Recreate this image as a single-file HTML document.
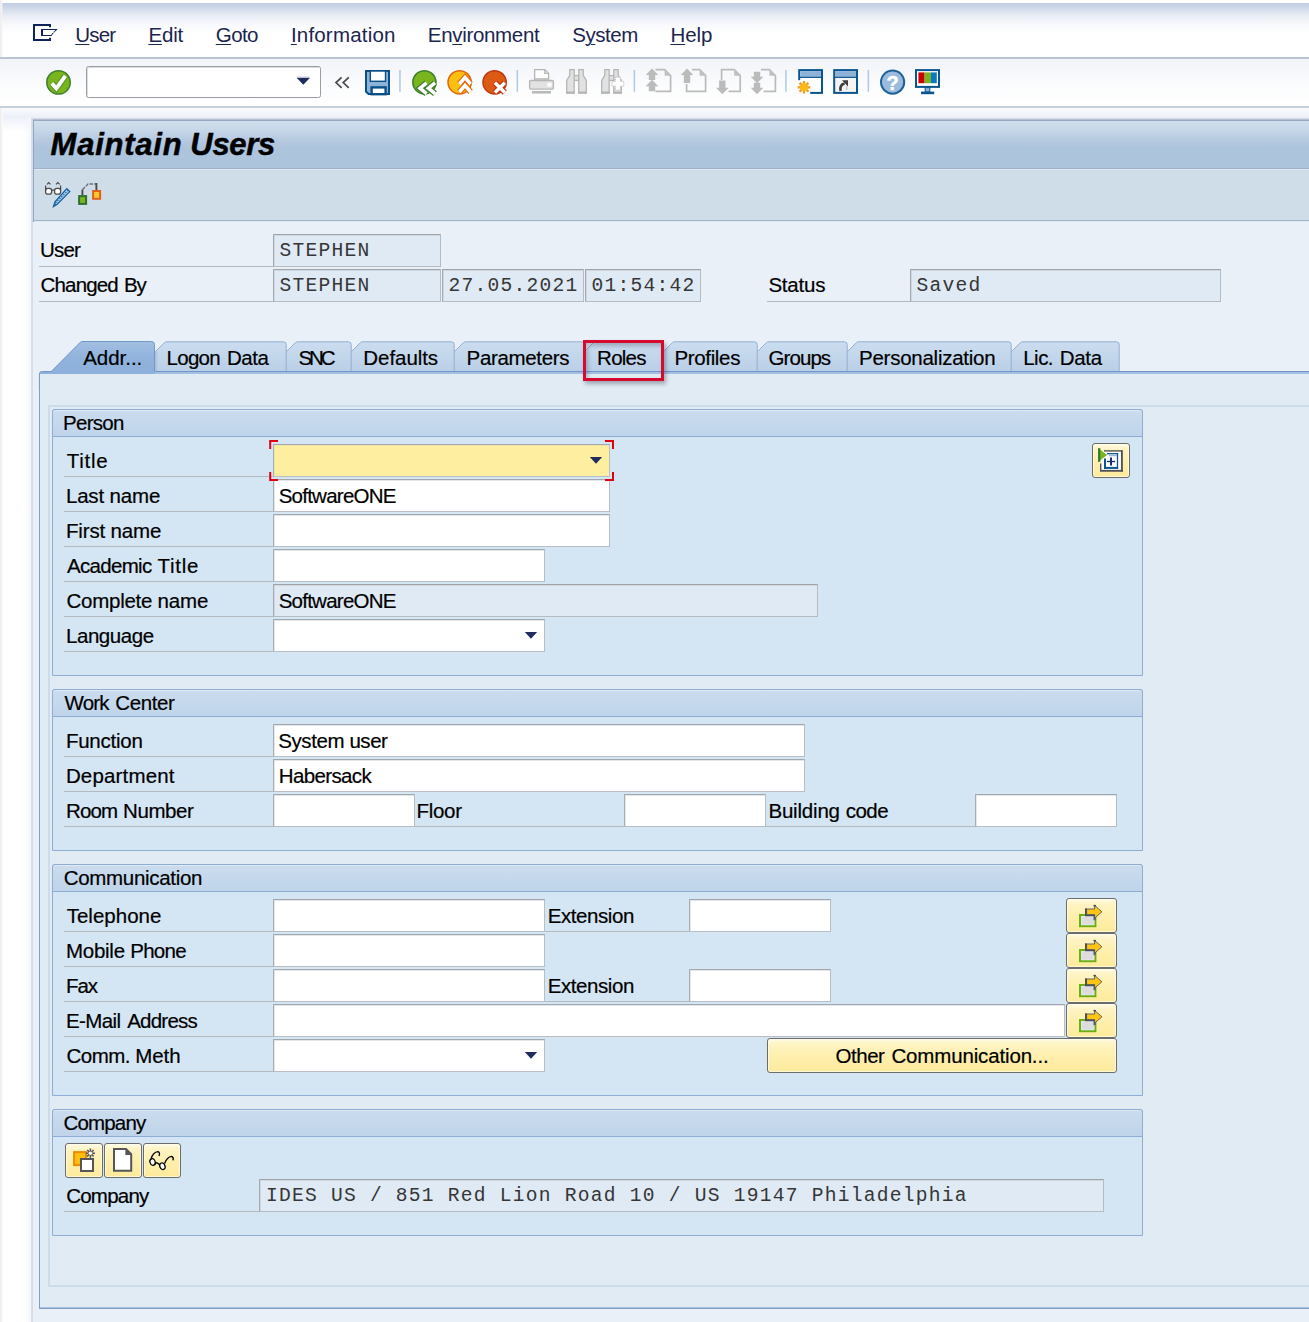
<!DOCTYPE html>
<html lang="en"><head><meta charset="utf-8"><title>Maintain Users</title>
<style>
html,body{margin:0;padding:0}
body{width:1309px;height:1322px;overflow:hidden;background:#fff;font-family:"Liberation Sans",sans-serif;color:#000}
#root{position:relative;width:1309px;height:1322px;overflow:hidden}
#root div,#root span,#root svg{position:absolute;box-sizing:border-box}
.t{white-space:nowrap;color:#000;-webkit-text-stroke:0.2px #000}
#root span.w{position:static}
.m{white-space:nowrap;color:#363636;font-family:"Liberation Mono",monospace}
.ti{white-space:nowrap;color:#000;font-weight:bold;font-style:italic;-webkit-text-stroke:0.5px #000}
.mn{white-space:nowrap;color:#1a2550}
.mn u{text-decoration:underline;text-decoration-thickness:1px;text-underline-offset:2px}
.f{background:#fff;border:1px solid #b9bec4;border-top-color:#a2a7ad;border-left-color:#a9aeb4;box-shadow:inset 1px 1px 0 #e4e7ea}
.r{background:#dfeaf5;border:1px solid #b7bcc2;border-top-color:#a0a4a8;border-left-color:#a6aaae;box-shadow:inset 1px 1px 0 #cfd8e1}
.ul{background:#b4b9be;height:1px}
.gb{background:#d4e5f3;border:1px solid #8eadd2;border-radius:3px 3px 0 0}
.gh{background:linear-gradient(#cbdcee,#bfd4ea);border:1px solid #8eadd2;border-radius:3px 3px 0 0;box-shadow:inset 0 1px 0 rgba(255,255,255,.4)}
.btn{background:linear-gradient(#fffdf0 0,#fff8d8 2px,#fef4c4 5px,#feefac 55%,#fdea9c 100%);border:1px solid #6b6c6c;border-radius:3px;box-shadow:inset 0 0 0 1px rgba(255,252,232,.75)}

</style></head>
<body>
<div id="root">
<div style="left:0px;top:3px;width:1309px;height:54px;background:linear-gradient(#c2cee5 0,#c8d3e7 3px,#dae1ee 8px,#ebeff6 14px,#f7f8fc 21px,#fff 30px)"></div>
<div style="left:0px;top:0px;width:3px;height:1322px;background:linear-gradient(90deg,#ededed,#f3f3f3 55%,rgba(255,255,255,0))"></div>
<span class="mn" style="left:75.31px;top:22.00px;font-size:20.5px;line-height:25px"><span class="w" style="letter-spacing:-0.853px"><u>U</u>ser</span></span>
<span class="mn" style="left:148.41px;top:22.00px;font-size:20.5px;line-height:25px"><span class="w" style="letter-spacing:-0.155px"><u>E</u>dit</span></span>
<span class="mn" style="left:215.78px;top:22.00px;font-size:20.5px;line-height:25px"><span class="w" style="letter-spacing:-0.596px"><u>G</u>oto</span></span>
<span class="mn" style="left:290.90px;top:22.00px;font-size:20.5px;line-height:25px"><span class="w" style="letter-spacing:0.193px"><u>I</u>nformation</span></span>
<span class="mn" style="left:427.81px;top:22.00px;font-size:20.5px;line-height:25px"><span class="w" style="letter-spacing:-0.321px">En<u>v</u>ironment</span></span>
<span class="mn" style="left:572.18px;top:22.00px;font-size:20.5px;line-height:25px"><span class="w" style="letter-spacing:-0.432px">S<u>y</u>stem</span></span>
<span class="mn" style="left:670.41px;top:22.00px;font-size:20.5px;line-height:25px"><span class="w" style="letter-spacing:-0.072px"><u>H</u>elp</span></span>
<div style="left:0px;top:57px;width:1309px;height:2px;background:#b9c4d4"></div>
<div style="left:0px;top:59px;width:1309px;height:47px;background:linear-gradient(#f1f4f9,#fbfcfd 60%,#fff)"></div>
<div style="left:0px;top:106px;width:1309px;height:2px;background:#c6cfdc"></div>
<div style="left:86px;top:66px;width:235px;height:32px;background:#fff;border:1px solid #9a9da3;border-radius:2.5px;box-shadow:inset 1px 1px 0 #dcdde0"></div>
<div style="left:31px;top:108px;width:1278px;height:1214px;background:#e9f0f8"></div>
<div style="left:3px;top:108px;width:1306px;height:10px;background:linear-gradient(#fafbfd,#eaeff8)"></div>
<div style="left:3px;top:118px;width:28px;height:14px;background:linear-gradient(#eef2f9,#fff)"></div>
<div style="left:24px;top:118px;width:7px;height:1204px;background:linear-gradient(90deg,rgba(255,255,255,0),#f4f6fa)"></div>
<div style="left:31px;top:118px;width:2px;height:1204px;background:linear-gradient(90deg,#dde2ec,#d3dae6)"></div>
<div style="left:33px;top:118px;width:1276px;height:1px;background:#d3dae6"></div>
<div style="left:33px;top:119px;width:1276px;height:1px;background:#b4c1d3"></div>
<div style="left:33px;top:120px;width:1276px;height:1px;background:#95a9c1"></div>
<div style="left:34px;top:121px;width:1275px;height:47px;background:linear-gradient(#d0dfed 0,#c6d7e8 9px,#b6cae0 19px,#adc4dd 27px,#adc4dd 100%)"></div>
<div style="left:34px;top:168px;width:1275px;height:1px;background:#9db2ca"></div>
<div style="left:34px;top:169px;width:1275px;height:1px;background:#e0e9f1"></div>
<div style="left:34px;top:170px;width:1275px;height:50px;background:#cfdde9"></div>
<div style="left:34px;top:220px;width:1275px;height:1px;background:#a2b4c7"></div>
<div style="left:34px;top:221px;width:1275px;height:1px;background:#dfe7f0"></div>
<div style="left:33px;top:120px;width:1px;height:102px;background:#8fa5c0"></div>
<span class="ti" style="left:50.56px;top:125.76px;font-size:31px;line-height:37px"><span class="w" style="letter-spacing:0.768px">Maintain</span> <span class="w" style="letter-spacing:-0.303px;margin-left:-0.73px">Users</span></span>
<div class="ul" style="left:39px;top:266px;width:234px;height:1px;"></div>
<div class="ul" style="left:39px;top:301px;width:234px;height:1px;"></div>
<span class="t" style="left:40.01px;top:237.40px;font-size:20.5px;line-height:25px"><span class="w" style="letter-spacing:-0.786px">User</span></span>
<span class="t" style="left:40.58px;top:272.40px;font-size:20.5px;line-height:25px"><span class="w" style="letter-spacing:-0.845px">Changed</span> <span class="w" style="letter-spacing:-1.091px;margin-left:0.44px">By</span></span>
<div class="r" style="left:273px;top:234px;width:168px;height:33px;"></div>
<div class="r" style="left:273px;top:269px;width:168px;height:33px;"></div>
<div class="r" style="left:442px;top:269px;width:142px;height:33px;"></div>
<div class="r" style="left:585px;top:269px;width:116px;height:33px;"></div>
<span class="m" style="left:279.40px;top:239.08px;font-size:19.6px;line-height:24px;letter-spacing:1.240px;">STEPHEN</span>
<span class="m" style="left:279.40px;top:274.08px;font-size:19.6px;line-height:24px;letter-spacing:1.240px;">STEPHEN</span>
<span class="m" style="left:448.50px;top:274.08px;font-size:19.6px;line-height:24px;letter-spacing:1.240px;">27.05.2021</span>
<span class="m" style="left:591.50px;top:274.08px;font-size:19.6px;line-height:24px;letter-spacing:1.240px;">01:54:42</span>
<div class="ul" style="left:767px;top:301px;width:143px;height:1px;"></div>
<span class="t" style="left:768.38px;top:272.40px;font-size:20.5px;line-height:25px"><span class="w" style="letter-spacing:-0.215px">Status</span></span>
<div class="r" style="left:910px;top:269px;width:311px;height:33px;"></div>
<span class="m" style="left:916.40px;top:274.08px;font-size:19.6px;line-height:24px;letter-spacing:1.240px;">Saved</span>
<svg style="left:0;top:330px" width="1309" height="60" viewBox="0 330 1309 60"><defs><linearGradient id="ti" x1="0" y1="0" x2="0" y2="1"><stop offset="0" stop-color="#cbddef"/><stop offset="1" stop-color="#b9cfe7"/></linearGradient><linearGradient id="ta" x1="0" y1="0" x2="0" y2="1"><stop offset="0" stop-color="#a3bfe3"/><stop offset="0.5" stop-color="#90b3dc"/><stop offset="1" stop-color="#8cb0da"/></linearGradient></defs><path d="M1010 372.5 L1010 353 L1020.4 342.7 Q1021.2 341.8 1023 341.8 L1116.4 341.8 Q1119.2 341.8 1119.2 344.6 L1119.2 372.5 Z" fill="url(#ti)" stroke="#93afd2" stroke-width="1"/><path d="M846 372.5 L846 353 L856.4 342.7 Q857.2 341.8 859 341.8 L1008.4 341.8 Q1011.2 341.8 1011.2 344.6 L1011.2 372.5 Z" fill="url(#ti)" stroke="#93afd2" stroke-width="1"/><path d="M756 372.5 L756 353 L766.4 342.7 Q767.2 341.8 769 341.8 L844.4 341.8 Q847.2 341.8 847.2 344.6 L847.2 372.5 Z" fill="url(#ti)" stroke="#93afd2" stroke-width="1"/><path d="M662 372.5 L662 353 L672.4 342.7 Q673.2 341.8 675 341.8 L754.4 341.8 Q757.2 341.8 757.2 344.6 L757.2 372.5 Z" fill="url(#ti)" stroke="#93afd2" stroke-width="1"/><path d="M583 372.5 L583 353 L593.4 342.7 Q594.2 341.8 596 341.8 L660.4 341.8 Q663.2 341.8 663.2 344.6 L663.2 372.5 Z" fill="url(#ti)" stroke="#93afd2" stroke-width="1"/><path d="M453 372.5 L453 353 L463.4 342.7 Q464.2 341.8 466 341.8 L581.4 341.8 Q584.2 341.8 584.2 344.6 L584.2 372.5 Z" fill="url(#ti)" stroke="#93afd2" stroke-width="1"/><path d="M350 372.5 L350 353 L360.4 342.7 Q361.2 341.8 363 341.8 L451.4 341.8 Q454.2 341.8 454.2 344.6 L454.2 372.5 Z" fill="url(#ti)" stroke="#93afd2" stroke-width="1"/><path d="M285 372.5 L285 353 L295.4 342.7 Q296.2 341.8 298 341.8 L348.4 341.8 Q351.2 341.8 351.2 344.6 L351.2 372.5 Z" fill="url(#ti)" stroke="#93afd2" stroke-width="1"/><path d="M154 372.5 L154 353 L164.4 342.7 Q165.2 341.8 167 341.8 L283.4 341.8 Q286.2 341.8 286.2 344.6 L286.2 372.5 Z" fill="url(#ti)" stroke="#93afd2" stroke-width="1"/><path d="M39 390 V375 Q39 371 43 371 H1309 V375 H40 V390 Z" fill="#a3c0e3"/><path d="M39.5 390 V375 Q39.5 371.5 43 371.5 H1309" fill="none" stroke="#7196c9" stroke-width="1.2"/><path d="M40 374.5 H1309" fill="none" stroke="#6e93c6" stroke-width="1.2"/><path d="M40 375 V374.5 Q40 371.5 43 371.5 H51 L80 342.6 Q81 341.5 83 341.5 H151.5 Q154.5 341.5 154.5 344.5 V375 Z" fill="url(#ta)"/><path d="M43 371.5 H51.3 L80.3 342.3 Q81 341.5 83 341.5 H151.5 Q154.5 341.5 154.5 344.5 V371.5" fill="none" stroke="#7297c9" stroke-width="1"/><rect x="155" y="352" width="1.5" height="19" fill="#9fb4cf" opacity="0.6"/><rect x="156.5" y="352" width="1.5" height="19" fill="#b4c6dc" opacity="0.5"/></svg>
<span class="t" style="left:83.15px;top:345.20px;font-size:20.5px;line-height:25px"><span class="w" style="letter-spacing:-0.025px">Addr...</span></span>
<span class="t" style="left:166.51px;top:345.20px;font-size:20.5px;line-height:25px"><span class="w" style="letter-spacing:-0.704px">Logon</span> <span class="w" style="letter-spacing:-0.438px;margin-left:1.22px">Data</span></span>
<span class="t" style="left:298.48px;top:345.20px;font-size:20.5px;line-height:25px"><span class="w" style="letter-spacing:-3.058px">SNC</span></span>
<span class="t" style="left:363.31px;top:345.20px;font-size:20.5px;line-height:25px"><span class="w" style="letter-spacing:-0.054px">Defaults</span></span>
<span class="t" style="left:466.61px;top:345.20px;font-size:20.5px;line-height:25px"><span class="w" style="letter-spacing:-0.336px">Parameters</span></span>
<span class="t" style="left:597.11px;top:345.20px;font-size:20.5px;line-height:25px"><span class="w" style="letter-spacing:-0.755px">Roles</span></span>
<span class="t" style="left:674.41px;top:345.20px;font-size:20.5px;line-height:25px"><span class="w" style="letter-spacing:-0.337px">Profiles</span></span>
<span class="t" style="left:768.58px;top:345.20px;font-size:20.5px;line-height:25px"><span class="w" style="letter-spacing:-0.940px">Groups</span></span>
<span class="t" style="left:859.01px;top:345.20px;font-size:20.5px;line-height:25px"><span class="w" style="letter-spacing:-0.250px">Personalization</span></span>
<span class="t" style="left:1023.21px;top:345.20px;font-size:20.5px;line-height:25px"><span class="w" style="letter-spacing:-0.514px">Lic.</span> <span class="w" style="letter-spacing:-0.305px;margin-left:0.96px">Data</span></span>
<div style="left:39px;top:374px;width:1270px;height:935px;background:#e0ebf4;border-left:1px solid #7f9fc7;border-bottom:1px solid #7f9fc7"></div>
<div style="left:40px;top:1307px;width:1269px;height:1px;background:#a9c1de"></div>
<div style="left:48px;top:405px;width:1261px;height:882px;border-left:2px solid #cddceb;border-top:2px solid #cddceb;border-bottom:2px solid #cddceb"></div>
<div style="left:583px;top:340px;width:81px;height:41px;border:3px solid #d60a2e;box-shadow:2px 3px 4px rgba(40,40,60,.35),inset 2px 3px 4px rgba(40,40,60,.28)"></div>
<div class="gb" style="left:52px;top:409px;width:1091px;height:267px;"></div>
<div class="gh" style="left:52px;top:409px;width:1091px;height:28px;"></div>
<span class="t" style="left:63.11px;top:409.90px;font-size:20.5px;line-height:25px"><span class="w" style="letter-spacing:-0.752px">Person</span></span>
<div class="gb" style="left:52px;top:689px;width:1091px;height:162px;"></div>
<div class="gh" style="left:52px;top:689px;width:1091px;height:28px;"></div>
<span class="t" style="left:64.60px;top:689.90px;font-size:20.5px;line-height:25px"><span class="w" style="letter-spacing:-0.818px">Work</span> <span class="w" style="letter-spacing:-0.374px;margin-left:0.80px">Center</span></span>
<div class="gb" style="left:52px;top:864px;width:1091px;height:232px;"></div>
<div class="gh" style="left:52px;top:864px;width:1091px;height:28px;"></div>
<span class="t" style="left:63.68px;top:864.90px;font-size:20.5px;line-height:25px"><span class="w" style="letter-spacing:-0.301px">Communication</span></span>
<div class="gb" style="left:52px;top:1109px;width:1091px;height:127px;"></div>
<div class="gh" style="left:52px;top:1109px;width:1091px;height:28px;"></div>
<span class="t" style="left:63.57px;top:1109.90px;font-size:20.5px;line-height:25px"><span class="w" style="letter-spacing:-0.844px">Company</span></span>
<div class="ul" style="left:64px;top:476px;width:209px;height:1px;"></div>
<span class="t" style="left:66.64px;top:448.00px;font-size:20.5px;line-height:25px"><span class="w" style="letter-spacing:0.752px">Title</span></span>
<div class="ul" style="left:64px;top:511px;width:209px;height:1px;"></div>
<span class="t" style="left:65.91px;top:483.00px;font-size:20.5px;line-height:25px"><span class="w" style="letter-spacing:-0.167px">Last</span> <span class="w" style="letter-spacing:-0.098px;margin-left:-0.27px">name</span></span>
<div class="ul" style="left:64px;top:546px;width:209px;height:1px;"></div>
<span class="t" style="left:65.91px;top:518.00px;font-size:20.5px;line-height:25px"><span class="w" style="letter-spacing:-0.144px">First</span> <span class="w" style="letter-spacing:-0.098px;margin-left:-0.32px">name</span></span>
<div class="ul" style="left:64px;top:581px;width:209px;height:1px;"></div>
<span class="t" style="left:67.05px;top:553.00px;font-size:20.5px;line-height:25px"><span class="w" style="letter-spacing:-0.697px">Academic</span> <span class="w" style="letter-spacing:0.727px;margin-left:0.36px">Title</span></span>
<div class="ul" style="left:64px;top:616px;width:209px;height:1px;"></div>
<span class="t" style="left:66.57px;top:588.00px;font-size:20.5px;line-height:25px"><span class="w" style="letter-spacing:-0.263px">Complete</span> <span class="w" style="letter-spacing:-0.065px;margin-left:-0.49px">name</span></span>
<div class="ul" style="left:64px;top:651px;width:209px;height:1px;"></div>
<span class="t" style="left:65.91px;top:623.00px;font-size:20.5px;line-height:25px"><span class="w" style="letter-spacing:-0.416px">Language</span></span>
<div class="f" style="left:273px;top:444px;width:337px;height:33px;background:#fdeea0;box-shadow:inset 1px 1px 0 #f1e4a4"></div>
<div class="f" style="left:273px;top:479px;width:337px;height:33px;"></div>
<div class="f" style="left:273px;top:514px;width:337px;height:33px;"></div>
<div class="f" style="left:273px;top:549px;width:272px;height:33px;"></div>
<div class="r" style="left:273px;top:584px;width:545px;height:33px;"></div>
<div class="f" style="left:273px;top:619px;width:272px;height:33px;"></div>
<span class="t" style="left:278.68px;top:483.00px;font-size:20.5px;line-height:25px"><span class="w" style="letter-spacing:-0.756px">SoftwareONE</span></span>
<span class="t" style="left:278.68px;top:588.00px;font-size:20.5px;line-height:25px"><span class="w" style="letter-spacing:-0.756px">SoftwareONE</span></span>
<div class="ul" style="left:64px;top:756px;width:209px;height:1px;"></div>
<span class="t" style="left:65.91px;top:728.00px;font-size:20.5px;line-height:25px"><span class="w" style="letter-spacing:-0.249px">Function</span></span>
<div class="ul" style="left:64px;top:791px;width:209px;height:1px;"></div>
<span class="t" style="left:65.91px;top:763.00px;font-size:20.5px;line-height:25px"><span class="w" style="letter-spacing:0.159px">Department</span></span>
<div class="ul" style="left:64px;top:826px;width:209px;height:1px;"></div>
<span class="t" style="left:65.91px;top:798.00px;font-size:20.5px;line-height:25px"><span class="w" style="letter-spacing:-0.820px">Room</span> <span class="w" style="letter-spacing:-0.396px;margin-left:-0.00px">Number</span></span>
<div class="f" style="left:273px;top:724px;width:532px;height:33px;"></div>
<div class="f" style="left:273px;top:759px;width:532px;height:33px;"></div>
<div class="f" style="left:273px;top:794px;width:142px;height:33px;"></div>
<span class="t" style="left:278.28px;top:728.00px;font-size:20.5px;line-height:25px"><span class="w" style="letter-spacing:-0.432px">System</span> <span class="w" style="letter-spacing:-0.444px;margin-left:-0.36px">user</span></span>
<span class="t" style="left:278.71px;top:763.00px;font-size:20.5px;line-height:25px"><span class="w" style="letter-spacing:-0.625px">Habersack</span></span>
<div class="ul" style="left:415px;top:826px;width:209px;height:1px;"></div>
<span class="t" style="left:416.61px;top:798.00px;font-size:20.5px;line-height:25px"><span class="w" style="letter-spacing:-0.323px">Floor</span></span>
<div class="f" style="left:624px;top:794px;width:142px;height:33px;"></div>
<div class="ul" style="left:766px;top:826px;width:209px;height:1px;"></div>
<span class="t" style="left:768.41px;top:798.00px;font-size:20.5px;line-height:25px"><span class="w" style="letter-spacing:-0.194px">Building</span> <span class="w" style="letter-spacing:-0.530px;margin-left:0.23px">code</span></span>
<div class="f" style="left:975px;top:794px;width:142px;height:33px;"></div>
<div class="ul" style="left:64px;top:931px;width:209px;height:1px;"></div>
<span class="t" style="left:66.64px;top:903.00px;font-size:20.5px;line-height:25px"><span class="w" style="letter-spacing:0.016px">Telephone</span></span>
<div class="ul" style="left:64px;top:966px;width:209px;height:1px;"></div>
<span class="t" style="left:65.91px;top:938.00px;font-size:20.5px;line-height:25px"><span class="w" style="letter-spacing:-0.242px">Mobile</span> <span class="w" style="letter-spacing:-0.721px;margin-left:-0.33px">Phone</span></span>
<div class="ul" style="left:64px;top:1001px;width:209px;height:1px;"></div>
<span class="t" style="left:65.91px;top:973.00px;font-size:20.5px;line-height:25px"><span class="w" style="letter-spacing:-1.018px">Fax</span></span>
<div class="ul" style="left:64px;top:1036px;width:209px;height:1px;"></div>
<span class="t" style="left:65.91px;top:1008.00px;font-size:20.5px;line-height:25px"><span class="w" style="letter-spacing:-0.588px">E-Mail</span> <span class="w" style="letter-spacing:-0.769px;margin-left:0.99px">Address</span></span>
<div class="ul" style="left:64px;top:1071px;width:209px;height:1px;"></div>
<span class="t" style="left:66.57px;top:1043.00px;font-size:20.5px;line-height:25px"><span class="w" style="letter-spacing:-0.548px">Comm.</span> <span class="w" style="letter-spacing:-0.096px;margin-left:-0.28px">Meth</span></span>
<div class="f" style="left:273px;top:899px;width:272px;height:33px;"></div>
<div class="f" style="left:273px;top:934px;width:272px;height:33px;"></div>
<div class="f" style="left:273px;top:969px;width:272px;height:33px;"></div>
<div class="f" style="left:273px;top:1004px;width:792px;height:33px;"></div>
<div class="f" style="left:273px;top:1039px;width:272px;height:33px;"></div>
<div class="ul" style="left:545px;top:931px;width:144px;height:1px;"></div>
<span class="t" style="left:547.71px;top:903.00px;font-size:20.5px;line-height:25px"><span class="w" style="letter-spacing:-0.428px">Extension</span></span>
<div class="f" style="left:689px;top:899px;width:142px;height:33px;"></div>
<div class="ul" style="left:545px;top:1001px;width:144px;height:1px;"></div>
<span class="t" style="left:547.71px;top:973.00px;font-size:20.5px;line-height:25px"><span class="w" style="letter-spacing:-0.428px">Extension</span></span>
<div class="f" style="left:689px;top:969px;width:142px;height:33px;"></div>
<div class="btn" style="left:1066px;top:898px;width:51px;height:35px;"></div>
<div class="btn" style="left:1066px;top:933px;width:51px;height:35px;"></div>
<div class="btn" style="left:1066px;top:968px;width:51px;height:35px;"></div>
<div class="btn" style="left:1066px;top:1003px;width:51px;height:35px;"></div>
<div class="btn" style="left:767px;top:1038px;width:350px;height:35px;"></div>
<span class="t" style="left:835.43px;top:1043.00px;font-size:20.5px;line-height:25px"><span class="w" style="letter-spacing:-0.442px">Other</span> <span class="w" style="letter-spacing:-0.155px;margin-left:1.29px">Communication...</span></span>
<div class="btn" style="left:1092px;top:443px;width:38px;height:35px;"></div>
<div class="btn" style="left:65px;top:1143px;width:38px;height:35px;"></div>
<div class="btn" style="left:104px;top:1143px;width:38px;height:35px;"></div>
<div class="btn" style="left:143px;top:1143px;width:38px;height:35px;"></div>
<div class="ul" style="left:64px;top:1211px;width:195px;height:1px;"></div>
<span class="t" style="left:66.17px;top:1183.00px;font-size:20.5px;line-height:25px"><span class="w" style="letter-spacing:-0.761px">Company</span></span>
<div class="r" style="left:259px;top:1179px;width:845px;height:33px;"></div>
<span class="m" style="left:265.90px;top:1184.08px;font-size:19.6px;line-height:24px;letter-spacing:1.240px;">IDES US / 851 Red Lion Road 10 / US 19147 Philadelphia</span>
<svg style="left:30px;top:20px" width="32" height="26" viewBox="30 20 32 26" ><g fill="none" stroke="#0e2458"><path d="M50 27.3 V25 H34 V40 H50 V37.7" stroke-width="2"/><path d="M42 29 V36" stroke-width="2"/><path d="M41 29.5 H57.2 M41 35.5 H51.3 L52 34.5 M52.3 34.2 L53 33 M53.6 32.4 L55 31.4 M55.2 31 L56.3 29.6" stroke-width="1.15"/></g></svg>
<svg style="left:40px;top:62px" width="910" height="40" viewBox="40 62 910 40" ><circle cx="58.5" cy="82.4" r="11.7" fill="#79b51c" stroke="#3f7f2e" stroke-width="1.5"/><path d="M51.8 83.4 L56.4 88.4 L65.4 75.8" fill="none" stroke="#3f7f2e" stroke-opacity=".6" stroke-width="6"/><path d="M51.8 83.4 L56.4 88.4 L65.4 75.8" fill="none" stroke="#fff" stroke-width="3.9"/><path d="M296.8 78 H309.8 L303.3 84.8 Z" fill="#1f2d5e"/><path d="M297 77.2 H309.6" stroke="#8f97b4" stroke-width=".8"/><path d="M341.6 77.3 L336 82.6 L341.6 87.9 M348.8 77.3 L343.2 82.6 L348.8 87.9" fill="none" stroke="#4a4a4a" stroke-width="1.7"/><path d="M366 71 H389 V94 H368.5 L366 91.5 Z" fill="#8db3d9" stroke="#0a5088" stroke-width="2"/><rect x="370.3" y="71" width="15.2" height="10.3" fill="#fff" stroke="#0a5088" stroke-width="1.4"/><rect x="371.6" y="87.4" width="14" height="6.8" fill="#fff" stroke="#0a5088" stroke-width="2.4"/><rect x="399.2" y="70" width="1.5" height="21.8" fill="#aec8e8"/><rect x="516.6" y="70" width="1.5" height="21.8" fill="#aec8e8"/><rect x="633.6" y="70" width="1.5" height="21.8" fill="#aec8e8"/><rect x="785.2" y="70" width="1.5" height="21.8" fill="#aec8e8"/><rect x="867.6" y="70" width="1.5" height="21.8" fill="#aec8e8"/><circle cx="424.4" cy="82.3" r="11.6" fill="#79b51c" stroke="#3f7f2e" stroke-width="1.5"/><path d="M426.6 82.8 L420 88.2 L426.6 93.6 M435 82.8 L428.4 88.2 L435 93.6" fill="none" stroke="#3f7f2e" stroke-width="6"/><path d="M426.6 82.8 L420 88.2 L426.6 93.6 M435 82.8 L428.4 88.2 L435 93.6" fill="none" stroke="#fff" stroke-width="3.5"/><circle cx="459.6" cy="82.3" r="11.6" fill="#fdc010" stroke="#e0670f" stroke-width="1.5"/><path d="M459.4 84 L465 77.4 L470.6 84 M459.4 92 L465 85.4 L470.6 92" fill="none" stroke="#e0670f" stroke-width="5.8"/><path d="M459.4 84 L465 77.4 L470.6 84 M459.4 92 L465 85.4 L470.6 92" fill="none" stroke="#fff" stroke-width="3.5"/><circle cx="494.6" cy="82.3" r="11.6" fill="#dc5a14" stroke="#c0390f" stroke-width="1.5"/><path d="M495 82.8 L504.8 92.6 M504.8 82.8 L495 92.6" fill="none" stroke="#bb330c" stroke-width="5.8"/><path d="M495 82.8 L504.8 92.6 M504.8 82.8 L495 92.6" fill="none" stroke="#fff" stroke-width="3.5"/><path d="M534.6 79 V69.6 H544.8 L548.6 73.4 V79 Z" fill="#fdfdfd" stroke="#b5b5b5" stroke-width="1.3"/><path d="M544.8 69.6 V73.4 H548.6" fill="none" stroke="#b5b5b5" stroke-width="1.3"/><rect x="529.6" y="80.5" width="23.8" height="8.6" rx="1" fill="#e2e2e2" stroke="#b5b5b5" stroke-width="1.3"/><rect x="547.4" y="82.8" width="4.2" height="3.8" fill="#fff"/><rect x="532" y="91" width="19" height="2.6" fill="#b9b9b9"/><g transform="translate(0 0)" fill="#e2e2e2" stroke="#b5b5b5" stroke-width="1.3"><rect x="573.6" y="75.6" width="5.8" height="4.8"/><path d="M566.7 93 V80.4 L569.8 75.4 V69.7 H574.2 V93 Z"/><path d="M586.3 93 V80.4 L583.2 75.4 V69.7 H578.8 V93 Z"/><path d="M566.2 92.6 H574.8 M578.2 92.6 H586.8" stroke-width="2"/></g><g transform="translate(35 0)" fill="#e2e2e2" stroke="#b5b5b5" stroke-width="1.3"><rect x="573.6" y="75.6" width="5.8" height="4.8"/><path d="M566.7 93 V80.4 L569.8 75.4 V69.7 H574.2 V93 Z"/><path d="M586.3 93 V80.4 L583.2 75.4 V69.7 H578.8 V93 Z"/><path d="M566.2 92.6 H574.8 M578.2 92.6 H586.8" stroke-width="2"/></g><path d="M615.4 77.2 H620.4 V81.2 H623.8 V86.2 H620.4 V90 H615.4 V86.2 H612 V81.2 H615.4 Z" fill="#fff" stroke="#b5b5b5" stroke-width=".9" stroke-dasharray="1.2 1"/><path d="M655.4 69.7 H664.6 L670.6 75.7 V91.3 H655.4" fill="none" stroke="#bbbbbb" stroke-width="1.7"/><path d="M664.6 69.10000000000001 V75.7 H671.2 Z" fill="#c0c0c0"/><path d="M652 68.6 L658.3 75.0 H655.2 V80.0 H648.8 V75.0 H645.7 Z" fill="#bbbbbb"/><path d="M652 79.8 L658.3 86.2 H655.2 V91.2 H648.8 V86.2 H645.7 Z" fill="#bbbbbb"/><path d="M692 69.7 H699.6 L705.6 75.7 V91.3 H686.6 V84" fill="none" stroke="#bbbbbb" stroke-width="1.7"/><path d="M699.6 69.10000000000001 V75.7 H706.2 Z" fill="#c0c0c0"/><path d="M687 68.6 L693.3 75.0 H690.2 V83.0 H683.8 V75.0 H680.7 Z" fill="#bbbbbb"/><path d="M721.6 80 V69.7 H734.2 L740.2 75.7 V91.3 H728.6" fill="none" stroke="#bbbbbb" stroke-width="1.7"/><path d="M734.2 69.10000000000001 V75.7 H740.8000000000001 Z" fill="#c0c0c0"/><path d="M722.3 94.2 L728.5999999999999 87.8 H725.5 V80.39999999999999 H719.0999999999999 V87.8 H716.0 Z" fill="#bbbbbb"/><path d="M761 69.7 H769.4 L775.4 75.7 V91.3 H763.6" fill="none" stroke="#bbbbbb" stroke-width="1.7"/><path d="M769.4 69.10000000000001 V75.7 H776.0 Z" fill="#c0c0c0"/><path d="M757 83.2 L763.3 76.8 H760.2 V71.8 H753.8 V76.8 H750.7 Z" fill="#bbbbbb"/><path d="M757 94.2 L763.3 87.8 H760.2 V82.8 H753.8 V87.8 H750.7 Z" fill="#bbbbbb"/><rect x="799.2" y="70.1" width="22.8" height="22.8" fill="#fff" stroke="#0a5590" stroke-width="2"/><rect x="800.2" y="71.1" width="20.8" height="5.6" fill="#8fb2d8"/><path d="M799 77.3 H822" stroke="#0a5590" stroke-width="1.3"/><rect x="796" y="80.2" width="14.2" height="15" fill="#fcfcfd"/><g stroke="#f39a1e" stroke-width="2.2"><path d="M804 81 V93.6 M797.7 87.3 H810.3 M799.6 82.9 L808.4 91.7 M808.4 82.9 L799.6 91.7"/></g><circle cx="804" cy="87.3" r="4" fill="#fdb913"/><rect x="834.2" y="70.1" width="22.8" height="22.8" fill="#f5f5f5" stroke="#0a5590" stroke-width="2"/><rect x="835.2" y="71.1" width="20.8" height="5.6" fill="#8fb2d8"/><path d="M834 77.3 H857" stroke="#0a5590" stroke-width="1.3"/><path d="M840.6 91 Q839.4 84.6 844.6 83.4" fill="none" stroke="#3d3d3d" stroke-width="2.6"/><path d="M842 80.2 H848 V86.4 Z" fill="#3d3d3d"/><path d="M846.6 86 V90" stroke="#c8c8c8" stroke-width="1.6"/><circle cx="892.6" cy="82.1" r="11.6" fill="#9bbbdc" stroke="#1d6199" stroke-width="2"/><text x="892.7" y="89.6" text-anchor="middle" font-family="Liberation Sans, sans-serif" font-weight="bold" font-size="20" fill="#fff" stroke="#fff" stroke-width=".5">?</text><rect x="916" y="70.1" width="23" height="16.8" fill="#fff" stroke="#0a5590" stroke-width="2"/><rect x="918.4" y="72.4" width="6.2" height="10.8" fill="#cc0000"/><rect x="924.6" y="72.4" width="6.4" height="10.8" fill="#78b41e"/><rect x="931" y="72.4" width="5.8" height="10.8" fill="#0a78c8"/><rect x="925.2" y="87.6" width="4.6" height="4.4" fill="#8fb2d8" stroke="#0a5590" stroke-width="1"/><rect x="921" y="91.6" width="13.2" height="2.6" fill="#0a5590"/></svg>
<svg style="left:40px;top:178px" width="70" height="34" viewBox="40 178 70 34" ><g fill="#fff" stroke="#4a4a4a" stroke-width="1.25"><rect x="45.6" y="188.4" width="6" height="5.8" rx="2.2"/><rect x="54.6" y="188.4" width="6" height="5.8" rx="2.2"/></g><path d="M45.6 191 V185.4 M47 184.4 L48.7 182.6 L50.4 184.4 M56 184.4 L57.8 182.6 L59.6 184.4 M60.6 190 V185.4 M51.8 190 H54.4" fill="none" stroke="#4a4a4a" stroke-width="1.25"/><path d="M66.8 188.6 L69.8 191.6 L57.2 204.2 L53.4 206.6 L54.8 202 Z" fill="#a9c9e8" stroke="#0a5a9a" stroke-width="1.15"/><path d="M68.3 190.1 L55.4 203" stroke="#1a66a6" stroke-width="1.2" stroke-dasharray="1.3 1.5"/><path d="M53.4 206.6 L54.6 202.6 L56.8 204.6 Z" fill="#2a70ac"/><path d="M82.4 195 V189.6 M96.4 183 V190" fill="none" stroke="#4a4a4a" stroke-width="1.9"/><path d="M82.6 189.4 L88 184 H96.4" fill="none" stroke="#555" stroke-opacity=".8" stroke-width="1.4" stroke-dasharray="3.4 1.2"/><rect x="79.1" y="196.1" width="7" height="7.8" fill="#7ab51d" stroke="#2f6f2f" stroke-width="2"/><rect x="93.1" y="191" width="7" height="7.8" fill="#fdc82a" stroke="#e2611a" stroke-width="2"/></svg>
<svg style="left:260px;top:430px" width="360" height="640" viewBox="260 430 360 640" ><path d="M589.8 457 H602.2 L596 463.8 Z" fill="#1f2d5e"/><path d="M524.8 632 H537.2 L531 638.8 Z" fill="#1f2d5e"/><path d="M524.8 1052 H537.2 L531 1058.8 Z" fill="#1f2d5e"/><g fill="none" stroke="#e0000f" stroke-width="2"><path d="M278 441 H270.2 V449"/><path d="M605 441 H613 V449"/><path d="M278 480 H270.2 V472"/><path d="M605 480 H613 V472"/></g></svg>
<svg style="left:60px;top:440px" width="1080" height="740" viewBox="60 440 1080 740" ><rect x="1101" y="451.4" width="20.4" height="19" fill="#fff"/><g fill="none" stroke="#50525a"><path d="M1104 450.9 H1122" stroke-width="1.4"/><path d="M1121.9 450.2 V471.7" stroke-width="1.9"/><path d="M1100 470.8 H1122.8" stroke-width="1.9"/><path d="M1100.7 463.6 V471" stroke-width="1.4"/></g><g fill="none" stroke="#0a5590"><path d="M1107 453.7 H1118.1" stroke-width="1.3"/><path d="M1117.5 453 V469" stroke-width="1.3"/><path d="M1104 467.9 H1118.1" stroke-width="2"/><path d="M1105 458.6 V469" stroke-width="2"/></g><path d="M1109 455.6 H1116.8" stroke="#9bbbdc" stroke-width="1.4"/><path d="M1111 457.4 V465.6" stroke="#142a7a" stroke-width="2"/><path d="M1106.9 461.5 H1115.1" stroke="#142a7a" stroke-width="1.3"/><path d="M1098.2 448.2 L1107.2 455 L1098.2 461.8 Z" fill="#7ab51d"/><path d="M1099.2 448.2 V461.8" stroke="#2f7a2f" stroke-width="2.2"/><g transform="translate(0 0)"><rect x="1080" y="915" width="15.4" height="11.2" fill="#dddddd" stroke="#6ab011" stroke-width="2"/><rect x="1081.5" y="916.5" width="12.4" height="8.2" fill="none" stroke="#e9e6f0" stroke-width="1" opacity=".8"/><path d="M1094.6 915 V920.2" stroke="#5a6070" stroke-width="2.2"/><path d="M1086.6 909 H1094.6 V905.4 L1101.9 911.8 L1094.6 918.2 V914.8 H1086.6 Z" fill="#fec514" stroke="#4a5060" stroke-width="1" stroke-opacity=".85"/><path d="M1085.9 908.3 V915.6 M1085 915.3 H1095" fill="none" stroke="#4a5060" stroke-width="1.8"/><path d="M1093.4 905.6 H1096" stroke="#4a5060" stroke-width="1.4"/></g><g transform="translate(0 35)"><rect x="1080" y="915" width="15.4" height="11.2" fill="#dddddd" stroke="#6ab011" stroke-width="2"/><rect x="1081.5" y="916.5" width="12.4" height="8.2" fill="none" stroke="#e9e6f0" stroke-width="1" opacity=".8"/><path d="M1094.6 915 V920.2" stroke="#5a6070" stroke-width="2.2"/><path d="M1086.6 909 H1094.6 V905.4 L1101.9 911.8 L1094.6 918.2 V914.8 H1086.6 Z" fill="#fec514" stroke="#4a5060" stroke-width="1" stroke-opacity=".85"/><path d="M1085.9 908.3 V915.6 M1085 915.3 H1095" fill="none" stroke="#4a5060" stroke-width="1.8"/><path d="M1093.4 905.6 H1096" stroke="#4a5060" stroke-width="1.4"/></g><g transform="translate(0 70)"><rect x="1080" y="915" width="15.4" height="11.2" fill="#dddddd" stroke="#6ab011" stroke-width="2"/><rect x="1081.5" y="916.5" width="12.4" height="8.2" fill="none" stroke="#e9e6f0" stroke-width="1" opacity=".8"/><path d="M1094.6 915 V920.2" stroke="#5a6070" stroke-width="2.2"/><path d="M1086.6 909 H1094.6 V905.4 L1101.9 911.8 L1094.6 918.2 V914.8 H1086.6 Z" fill="#fec514" stroke="#4a5060" stroke-width="1" stroke-opacity=".85"/><path d="M1085.9 908.3 V915.6 M1085 915.3 H1095" fill="none" stroke="#4a5060" stroke-width="1.8"/><path d="M1093.4 905.6 H1096" stroke="#4a5060" stroke-width="1.4"/></g><g transform="translate(0 105)"><rect x="1080" y="915" width="15.4" height="11.2" fill="#dddddd" stroke="#6ab011" stroke-width="2"/><rect x="1081.5" y="916.5" width="12.4" height="8.2" fill="none" stroke="#e9e6f0" stroke-width="1" opacity=".8"/><path d="M1094.6 915 V920.2" stroke="#5a6070" stroke-width="2.2"/><path d="M1086.6 909 H1094.6 V905.4 L1101.9 911.8 L1094.6 918.2 V914.8 H1086.6 Z" fill="#fec514" stroke="#4a5060" stroke-width="1" stroke-opacity=".85"/><path d="M1085.9 908.3 V915.6 M1085 915.3 H1095" fill="none" stroke="#4a5060" stroke-width="1.8"/><path d="M1093.4 905.6 H1096" stroke="#4a5060" stroke-width="1.4"/></g><rect x="74.1" y="1152.1" width="12" height="13" fill="#fdc010" stroke="#f08a00" stroke-width="2"/><rect x="81" y="1159" width="12" height="12" fill="#fff" stroke="#55555a" stroke-width="2"/><g stroke="#555" stroke-width="1.5"><path d="M90.4 1148.6 V1158 M86 1153.2 H95 M87.2 1150 L93.6 1156.4 M93.6 1150 L87.2 1156.4"/></g><circle cx="90.4" cy="1153.2" r="1.8" fill="#fff"/><path d="M114 1149 H126 L131.2 1154.2 V1170.8 H114 Z" fill="#fff" stroke="#55555a" stroke-width="2"/><path d="M125.4 1148.4 V1155 H132 Z" fill="#55555a"/><g fill="none" stroke="#000" stroke-width="1.3"><ellipse cx="152.6" cy="1162" rx="2.6" ry="3.4" fill="#fff" transform="rotate(-20 152.6 1162)"/><ellipse cx="162.4" cy="1166.2" rx="2.6" ry="3.4" fill="#fff" transform="rotate(-20 162.4 1166.2)"/><path d="M155 1163 Q157.4 1162 159.8 1165 M151 1159 Q153 1152 158 1151.6 Q160.4 1152.4 159 1156 M164.6 1163.4 Q167 1157 171.6 1156.4 Q174 1157.4 173 1160.4"/></g></svg>
</div>
</body></html>
